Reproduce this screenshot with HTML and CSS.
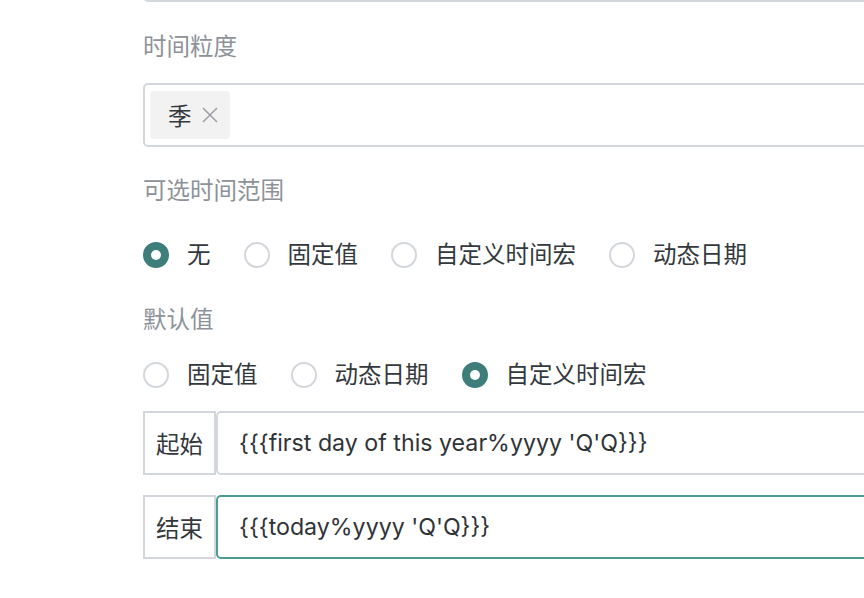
FILE: index.html
```html
<!DOCTYPE html>
<html lang="zh-CN">
<head>
<meta charset="utf-8">
<link rel="stylesheet" href="styles.css">
</head>
<body>
<div class="form">
  <div class="prev-input"></div>

  <div class="label label-grain">时间粒度</div>
  <div class="tag-input">
    <span class="tag">季<span class="tag-close"><svg width="16" height="16" viewBox="0 0 16 16"><path d="M1 1 L15 15 M15 1 L1 15" stroke="#9a9ea4" stroke-width="1.5" fill="none"/></svg></span></span>
  </div>

  <div class="label label-range">可选时间范围</div>
  <div class="radio-row row-range">
    <label class="radio"><span class="dot checked"></span><span class="radio-text">无</span></label>
    <label class="radio"><span class="dot"></span><span class="radio-text">固定值</span></label>
    <label class="radio"><span class="dot"></span><span class="radio-text">自定义时间宏</span></label>
    <label class="radio"><span class="dot"></span><span class="radio-text">动态日期</span></label>
  </div>

  <div class="label label-default">默认值</div>
  <div class="radio-row row-default">
    <label class="radio"><span class="dot"></span><span class="radio-text">固定值</span></label>
    <label class="radio"><span class="dot"></span><span class="radio-text">动态日期</span></label>
    <label class="radio"><span class="dot checked"></span><span class="radio-text">自定义时间宏</span></label>
  </div>

  <div class="input-group group-start">
    <span class="addon">起始</span>
    <div class="field">{{{first day of this year%yyyy 'Q'Q}}}</div>
  </div>
  <div class="input-group group-end">
    <span class="addon">结束</span>
    <div class="field focused">{{{today%yyyy 'Q'Q}}}</div>
  </div>
</div>
</body>
</html>
```

FILE: styles.css
```css
html, body {
  margin: 0;
  padding: 0;
  background: #ffffff;
  overflow: hidden;
}

body {
  width: 864px;
  height: 598px;
  font-family: "Liberation Sans", "Noto Sans CJK SC", sans-serif;
  font-size: 23.5px;
  color: #33383d;
}

.form {
  display: flex;
  flex-direction: column;
  align-items: flex-start;
  padding-left: 143px;
  width: 780px;
}

.prev-input {
  width: 100%;
  box-sizing: border-box;
  height: 60px;
  margin-top: -58px;
  border: 2px solid #d3d7dc;
  border-radius: 5px;
}

.label {
  color: #8d9299;
  line-height: 32px;
  height: 32px;
}

.label-grain { margin-top: 29px; }
.label-range { margin-top: 28px; }
.label-default { margin-top: 33px; }

.tag-input {
  margin-top: 20px;
  width: 100%;
  box-sizing: border-box;
  height: 64px;
  border: 2px solid #d3d7dc;
  border-radius: 5px;
  padding: 6px 5px;
  display: flex;
  align-items: center;
}

.tag {
  display: flex;
  align-items: center;
  height: 48px;
  padding: 0 12px 0 18px;
  background: #f2f2f2;
  border-radius: 4px;
  color: #33383d;
  gap: 10px;
}

.tag-close {
  display: flex;
  align-items: center;
}

.radio-row {
  display: flex;
  align-items: center;
  height: 32px;
  gap: 33px;
}

.row-range { margin-top: 32px; }
.row-default { margin-top: 23px; }

.radio {
  display: flex;
  align-items: center;
  gap: 18px;
}

.dot {
  width: 26px;
  height: 26px;
  box-sizing: border-box;
  border-radius: 50%;
  border: 2px solid #d3d7dc;
  background: #fff;
  display: flex;
  align-items: center;
  justify-content: center;
}

.dot.checked {
  border-color: #3d7e7a;
  background: #3d7e7a;
}

.dot.checked::after {
  content: "";
  width: 10px;
  height: 10px;
  border-radius: 50%;
  background: #fff;
}

.radio-text {
  color: #33383d;
  line-height: 32px;
}

.input-group {
  display: flex;
  width: 100%;
  height: 64px;
  margin-top: 20px;
}

.addon {
  width: 73px;
  box-sizing: border-box;
  border: 2px solid #d3d7dc;
  display: flex;
  align-items: center;
  justify-content: center;
  color: #33383d;
  flex: none;
}

.field {
  flex: 1;
  box-sizing: border-box;
  border: 2px solid #d3d7dc;
  border-radius: 5px;
  display: flex;
  align-items: center;
  padding-left: 21px;
  color: #2f3337;
  font-family: Inter, "Liberation Sans", sans-serif;
  font-size: 23.2px;
}

.field.focused {
  border-color: #4e9a94;
}
```
